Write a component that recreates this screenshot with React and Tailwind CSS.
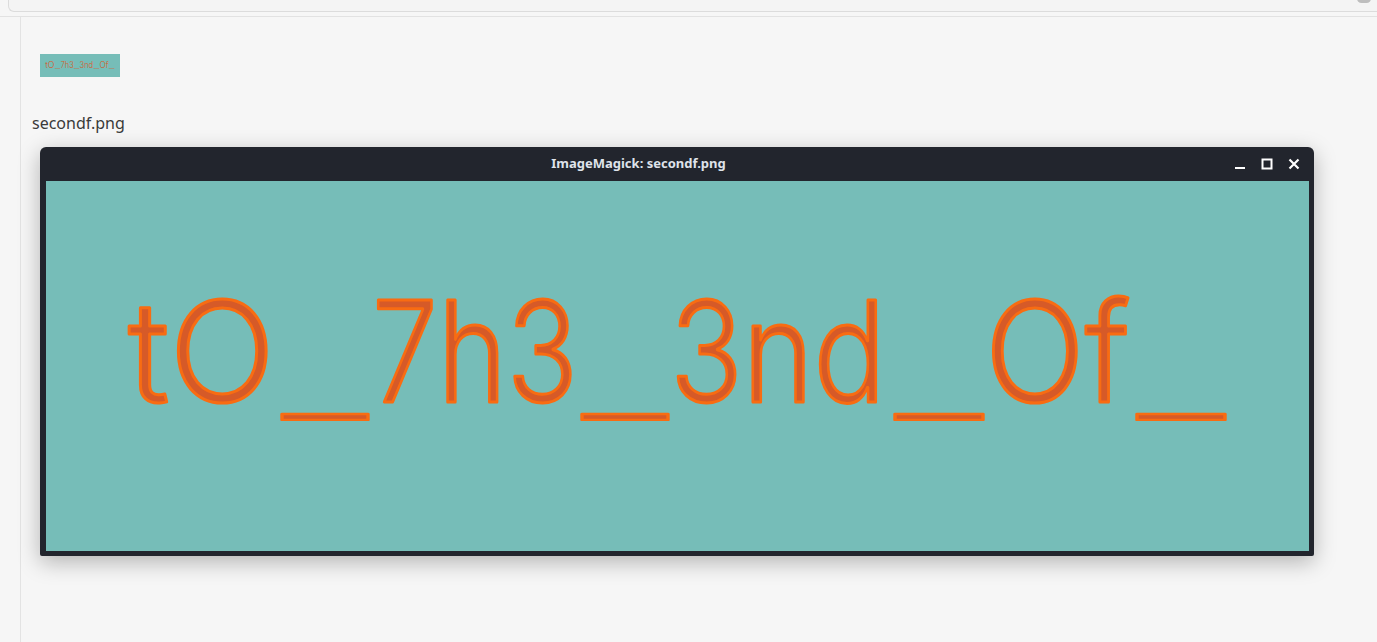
const pieces = [
  { t: 'tO', x: 82, w: 147 },
  { t: '_', x: 236, w: 86, u: true },
  { t: '7h3', x: 326, w: 206 },
  { t: '_', x: 536, w: 86, u: true },
  { t: '3nd', x: 624, w: 216 },
  { t: '_', x: 849, w: 88, u: true },
  { t: 'Of', x: 939, w: 145 },
  { t: '_', x: 1091, w: 88, u: true },
]

function FlagImage({ width, height, stroke }) {
  return (
    <svg width={width} height={height} viewBox="0 0 1263 370" preserveAspectRatio="none">
      {pieces.map((p, i) => (
        <text
          key={i}
          x={p.x}
          y={p.u ? 233 : 221}
          textLength={p.w}
          lengthAdjust="spacingAndGlyphs"
          fontFamily="Inter, 'DejaVu Sans', sans-serif"
          fontWeight={p.u ? 200 : 300}
          fontSize="140"
          fill="#d65a28"
          stroke="#f86c12"
          strokeWidth={p.u ? stroke * 0.8 : stroke}
          strokeLinejoin="round"
        >
          {p.t}
        </text>
      ))}
    </svg>
  )
}

export default function App() {
  return (
    <div className="h-[642px] w-[1377px] overflow-hidden bg-[#f6f6f6] font-['Noto_Sans',sans-serif]">
      {/* cut-off address bar at the very top */}
      <div className="relative h-[17px] border-b border-[#e2e2e2]">
        <div className="ml-[8px] h-[12px] rounded-bl-[6px] border-b border-l border-[#dcdcdc] bg-[#f4f4f4]"></div>
        <div className="absolute right-[6px] top-[-6px] h-[9px] w-[14px] rounded-full bg-[#9a9a9a] opacity-60"></div>
      </div>

      <div className="flex h-[625px]">
        <div className="w-[21px] shrink-0 border-r border-[#e3e3e3]"></div>

        <div className="flex flex-col">
          {/* thumbnail */}
          <div className="ml-[19px] mt-[37px] h-[23px] w-[80px] bg-[#76bdb8]">
            <FlagImage width={80} height={23} stroke={0} />
          </div>

          <p className="ml-[11px] mt-[34px] text-[16px] leading-[24px] text-[#3a3a3a]">secondf.png</p>

          {/* ImageMagick window */}
          <div className="ml-[19px] mt-[12px] w-[1274px] rounded-t-[6px] rounded-b-[2px] bg-[#22252d] shadow-[0_6px_22px_rgba(0,0,0,0.28)]">
            <div className="relative flex h-[34px] items-center justify-center pr-[77px]">
              <span className="text-[13px] font-bold text-[#dfe3ea]">ImageMagick: secondf.png</span>
              <div className="absolute right-[14px] top-0 flex h-[34px] items-center gap-[15px]">
                <svg width="12" height="12" viewBox="0 0 12 12">
                  <rect x="1" y="9" width="10" height="2" fill="#ffffff" />
                </svg>
                <svg width="12" height="12" viewBox="0 0 12 12">
                  <rect x="1.5" y="1.5" width="9" height="9" fill="none" stroke="#ffffff" strokeWidth="2" />
                </svg>
                <svg width="12" height="12" viewBox="0 0 12 12">
                  <path d="M1.5 1.5 L10.5 10.5 M10.5 1.5 L1.5 10.5" stroke="#ffffff" strokeWidth="2.2" />
                </svg>
              </div>
            </div>
            <div className="pb-[5px] pl-[6px] pr-[5px]">
              <div className="h-[370px] w-[1263px] bg-[#76bdb8]">
                <FlagImage width={1263} height={370} stroke={3} />
              </div>
            </div>
          </div>
        </div>
      </div>
    </div>
  )
}
